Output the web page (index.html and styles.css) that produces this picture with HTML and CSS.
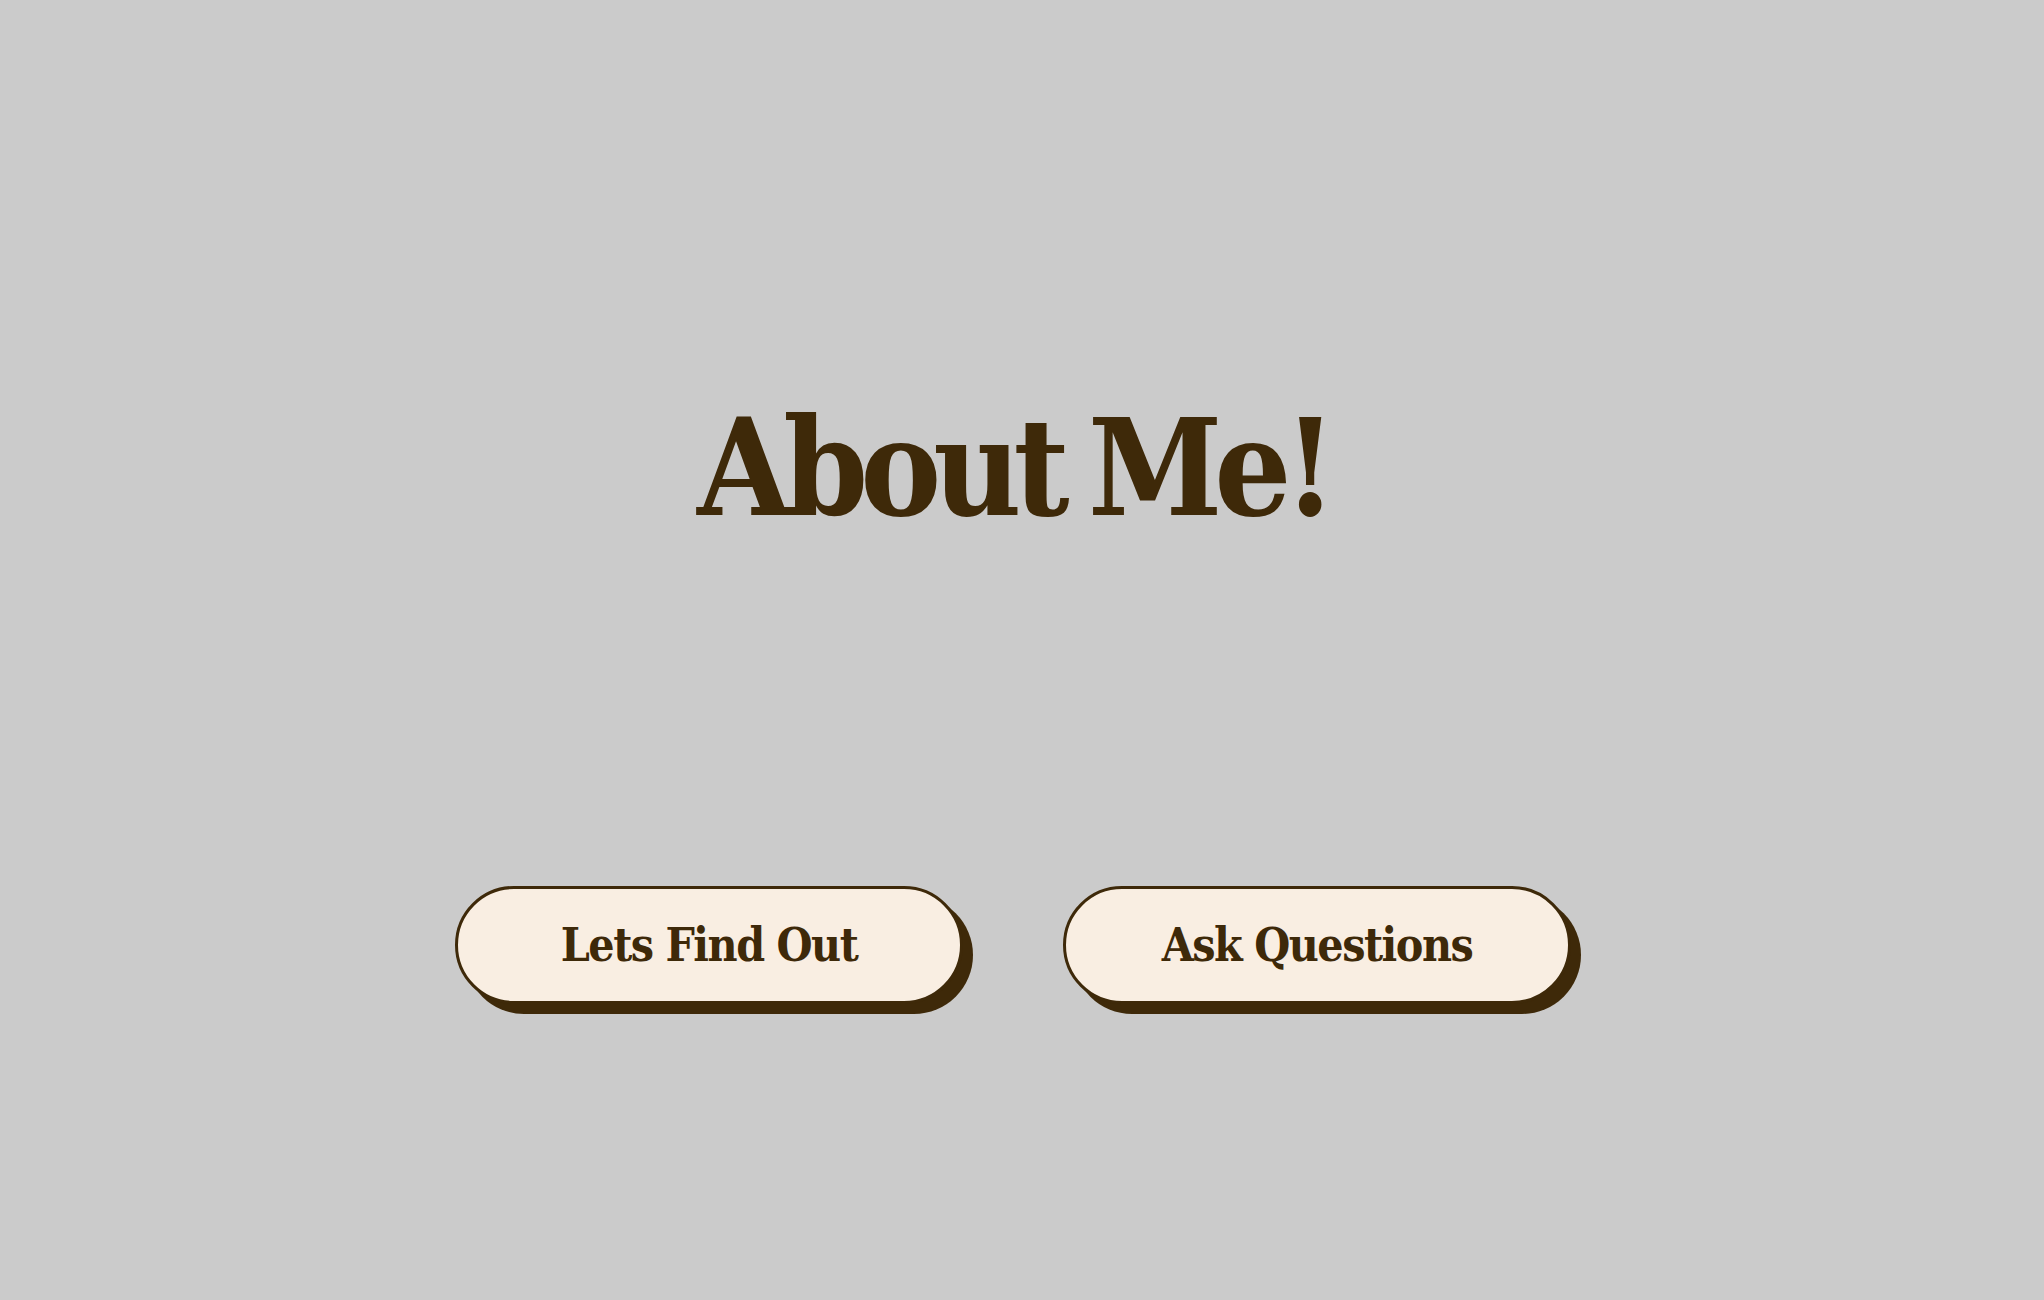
FILE: index.html
```html
<!DOCTYPE html>
<html lang="en">
<head>
<meta charset="utf-8">
<title>About Me!</title>
<link rel="stylesheet" href="styles.css">
</head>
<body>
<main class="page">
  <h1 class="title">About Me!</h1>
  <div class="actions">
    <button class="pill">Lets Find Out</button>
    <button class="pill">Ask Questions</button>
  </div>
</main>
</body>
</html>
```
FILE: styles.css
```css
html, body {
  margin: 0;
  padding: 0;
}
body {
  background: #cbcbcb;
  font-family: "DejaVu Serif", "Liberation Serif", serif;
  color: #3e2909;
}
.page {
  min-height: 1300px;
  box-sizing: border-box;
  padding-right: 18px;
  display: flex;
  flex-direction: column;
  align-items: center;
}
.title {
  margin: 380px 0 0;
  font-size: 135px;
  font-weight: bold;
  font-stretch: condensed;
  line-height: 1.3;
  letter-spacing: -8px;
  word-spacing: -8px;
}
.actions {
  display: flex;
  gap: 100px;
  margin-top: 330px;
}
.pill {
  width: 508px;
  height: 118px;
  box-sizing: border-box;
  border: 3px solid #3e2909;
  border-radius: 59px;
  background: #f9eee2;
  box-shadow: 10px 10px 0 #3e2909;
  font-family: "DejaVu Serif", "Liberation Serif", serif;
  font-weight: bold;
  font-stretch: condensed;
  font-size: 46px;
  letter-spacing: -1.5px;
  color: #3e2909;
  padding: 0;
}
```
